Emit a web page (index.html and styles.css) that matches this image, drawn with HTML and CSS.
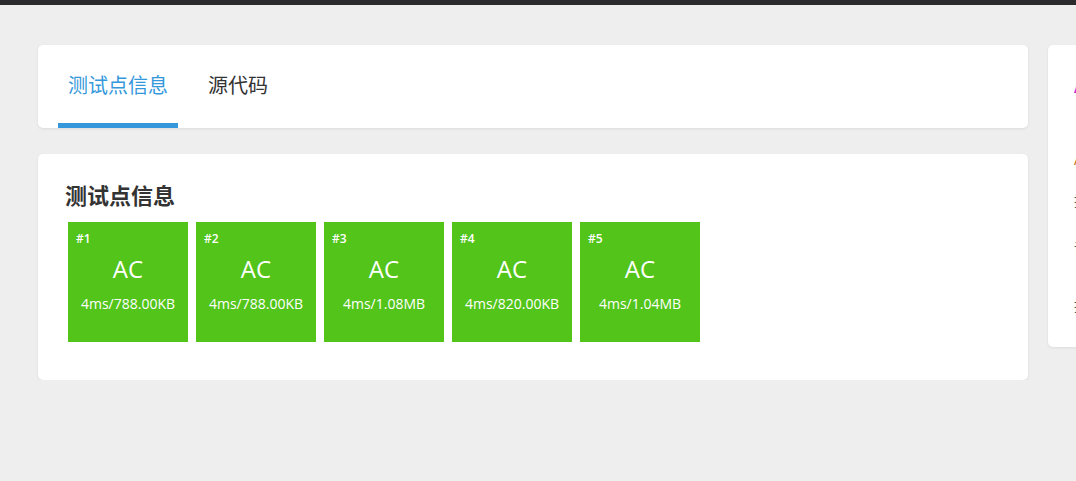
FILE: index.html
```html
<!DOCTYPE html>
<html lang="zh">
<head>
  <meta charset="UTF-8" />
  <title>提交记录</title>
  <link rel="stylesheet" href="styles.css">
</head>
<body>
  <div class="topbar"></div>

  <div class="page">
    <div class="main">
      <div class="card tabs">
        <div class="tab active">测试点信息</div>
        <div class="tab">源代码</div>
      </div>

      <div class="card cases">
        <h2>测试点信息</h2>
        <div class="case-list">
          <div class="case">
            <span class="case-id">#1</span>
            <span class="case-status">AC</span>
            <span class="case-info">4ms/788.00KB</span>
          </div>
          <div class="case">
            <span class="case-id">#2</span>
            <span class="case-status">AC</span>
            <span class="case-info">4ms/788.00KB</span>
          </div>
          <div class="case">
            <span class="case-id">#3</span>
            <span class="case-status">AC</span>
            <span class="case-info">4ms/1.08MB</span>
          </div>
          <div class="case">
            <span class="case-id">#4</span>
            <span class="case-status">AC</span>
            <span class="case-info">4ms/820.00KB</span>
          </div>
          <div class="case">
            <span class="case-id">#5</span>
            <span class="case-status">AC</span>
            <span class="case-info">4ms/1.04MB</span>
          </div>
        </div>
      </div>
    </div>

    <!-- side panel, mostly off screen -->
    <div class="side">
      <div class="card side-card">
        <div class="side-title">Accepted</div>
        <div class="side-score">AC 100</div>
        <div class="side-row first">提交者</div>
        <div class="side-row">语言</div>
        <div class="side-row last">提交时间</div>
      </div>
    </div>
  </div>
</body>
</html>
```

FILE: styles.css
```css
html, body {
  margin: 0;
  padding: 0;
  background-color: #eeeeee;
  font-family: "Open Sans", "Noto Sans CJK SC", sans-serif;
  color: #333;
  overflow: hidden;
}

.topbar {
  height: 5px;
  background-color: #2b2b2d;
}

.page {
  display: flex;
  gap: 20px;
  padding: 40px 0 0 38px;
  width: 1300px;
}

.main {
  width: 990px;
  flex-shrink: 0;
}

.card {
  background: white;
  border-radius: 5px;
  box-shadow: 0 1px 3px rgba(0,0,0,0.08);
}

/* tabs */
.tabs {
  display: flex;
  height: 83px;
  padding-left: 20px;
  margin-bottom: 26px;
  box-sizing: border-box;
}

.tab {
  padding: 0 10px;
  margin-right: 20px;
  font-size: 20px;
  line-height: 82px;
  color: #333;
  border-bottom: 5px solid transparent;
}

.tab.active {
  color: #3498db;
  border-bottom-color: #3498db;
}

/* test cases */
.cases {
  padding: 26px 30px 38px;
}

.cases h2 {
  margin: 0 0 12px -3px;
  font-size: 22px;
  line-height: 30px;
  font-weight: bold;
  color: #333;
}

.case-list {
  display: flex;
  gap: 8px;
}

.case {
  width: 120px;
  height: 120px;
  background-color: #52c41a;
  color: white;
  display: flex;
  flex-direction: column;
  align-items: center;
}

.case-id {
  align-self: flex-start;
  margin: 9px 0 0 8px;
  font-size: 12px;
  font-weight: 600;
  line-height: 16px;
}

.case-status {
  font-size: 24px;
  line-height: 32px;
  margin-top: 6px;
}

.case-info {
  font-size: 14px;
  line-height: 18px;
  margin-top: 10px;
}

/* side panel */
.side {
  width: 260px;
  flex-shrink: 0;
}

.side-card {
  padding: 30px 26px 20px;
  height: 302px;
  box-sizing: border-box;
}

.side-title {
  font-size: 16px;
  font-weight: bold;
  color: #c62fd8;
  line-height: 24px;
}

.side-score {
  margin-top: 48px;
  font-size: 16px;
  color: #c07a1e;
  line-height: 24px;
}

.side-row {
  font-size: 14px;
  line-height: 20px;
  margin-top: 27px;
  color: #555;
}

.side-row.first {
  margin-top: 20px;
}

.side-row.last {
  margin-top: 38px;
}
```
